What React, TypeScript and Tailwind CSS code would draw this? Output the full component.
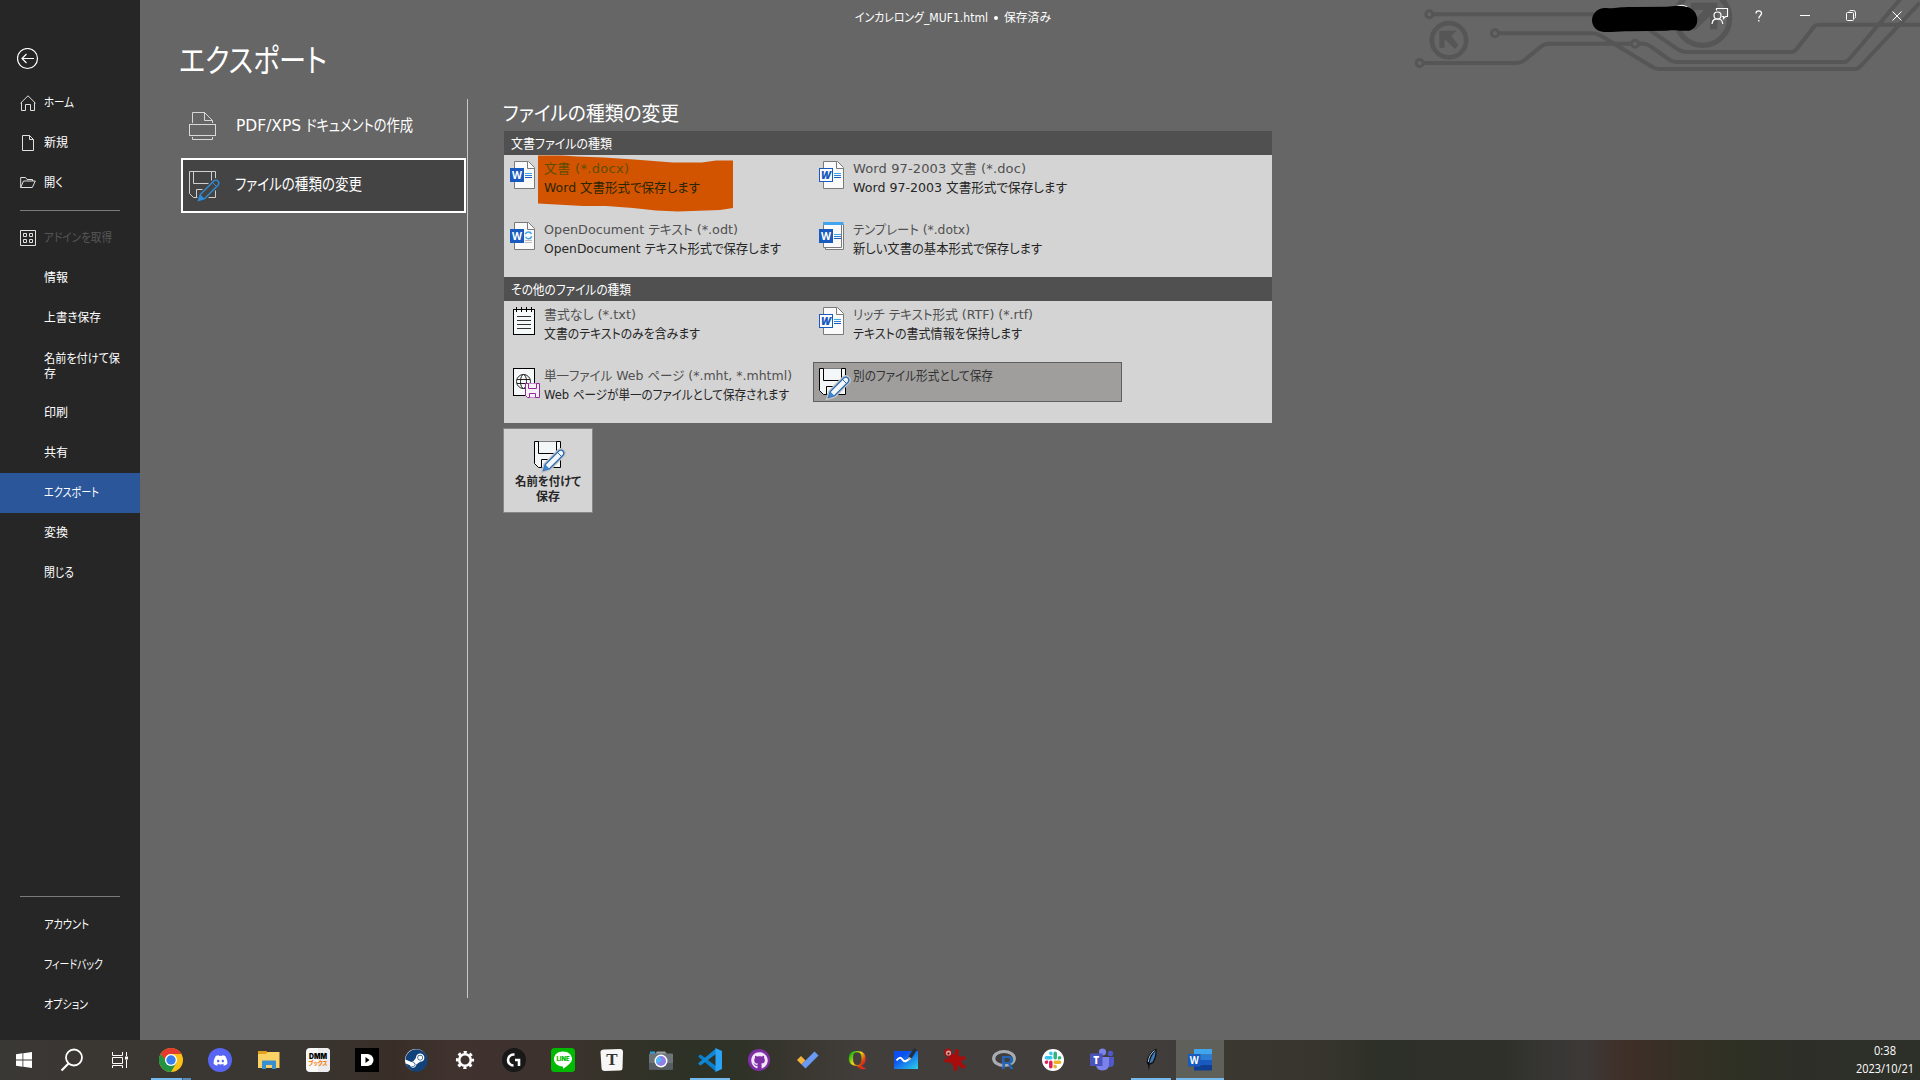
import { useLayoutEffect, useRef, type ReactNode } from "react";
import { FaDiscord, FaGithub, FaSteam } from "react-icons/fa";

/* Text run that spans `w` pixels: long runs are condensed, short ones are letter-spaced. */
function Fit({ w, children, className = "" }: { w: number; children: string; className?: string }) {
  const ref = useRef<HTMLSpanElement>(null);
  useLayoutEffect(() => {
    const el = ref.current;
    if (!el) return;
    el.style.letterSpacing = "0px";
    el.style.transform = "none";
    el.style.width = "auto";
    const natural = el.getBoundingClientRect().width;
    if (natural > w) {
      el.style.transform = `scaleX(${w / natural})`;
      el.style.width = `${w}px`;
    } else {
      el.style.letterSpacing = `${(w - natural) / Math.max(1, children.length - 1)}px`;
    }
  }, [w, children]);
  return (
    <span ref={ref} className={`inline-block origin-left self-start whitespace-pre ${className}`}>
      {children}
    </span>
  );
}

type NavEntry = { label: string; w: number; icon?: ReactNode; active?: boolean; disabled?: boolean };

const stroke = "fill-none stroke-[#e0e0e0]";

const topNav: NavEntry[] = [
  {
    label: "ホーム",
    w: 30,
    icon: (
      <svg width="16" height="16" viewBox="0 0 16 16" className={stroke}>
        <path d="M0.5 8.2L8 0.8l7.5 7.4M1.5 7.3V15.5H5.5V9.5H10.5V15.5H14.5V7.3" />
      </svg>
    ),
  },
  {
    label: "新規",
    w: 24,
    icon: (
      <svg width="16" height="16" viewBox="0 0 16 16" className={stroke}>
        <path d="M2.5 0.5H9.5L13.5 4.5V15.5H2.5ZM9.5 0.5V4.5H13.5" />
      </svg>
    ),
  },
  {
    label: "開く",
    w: 19,
    icon: (
      <svg width="16" height="16" viewBox="0 0 16 16" className={stroke}>
        <path d="M0.7 12.500V2.5H5.5L7 4.5H12.5V6M0.7 12.500L3.5 6H15.3L12.3 12.500Z" />
      </svg>
    ),
  },
];

const midNav: NavEntry[] = [
  {
    label: "アドインを取得",
    w: 68,
    disabled: true,
    icon: (
      <svg width="16" height="16" viewBox="0 0 16 16" className={stroke}>
        <path d="M0.5 0.5H15.5V15.5H0.5ZM3.5 3.5H6.5V6.5H3.5ZM9.5 3.5H12.5V6.5H9.5ZM3.5 9.5H6.5V12.5H3.5ZM9.5 9.5H12.5V12.5H9.5Z" />
      </svg>
    ),
  },
  { label: "情報", w: 24 },
  { label: "上書き保存", w: 57 },
];

const lowNav: NavEntry[] = [
  { label: "印刷", w: 24 },
  { label: "共有", w: 24 },
  { label: "エクスポート", w: 55, active: true },
  { label: "変換", w: 24 },
  { label: "閉じる", w: 30 },
];

const bottomNav: NavEntry[] = [
  { label: "アカウント", w: 45 },
  { label: "フィードバック", w: 59 },
  { label: "オプション", w: 44 },
];

function NavItem({ label, w, icon, active, disabled }: NavEntry) {
  return (
    <div className={`flex h-10 items-center pl-5 ${active ? "bg-[#2b579a]" : ""}`}>
      <div className="mr-2 -mt-px h-4 w-4">{icon}</div>
      <Fit w={w} className={`mt-[11px] text-xs leading-[19px] ${disabled ? "text-[#565656]" : "text-white"}`}>
        {label}
      </Fit>
    </div>
  );
}

function Sidebar() {
  return (
    <nav className="flex w-[140px] shrink-0 flex-col bg-[#262626]">
      <div className="flex h-[83px] pt-12 pl-[17px]">
        <svg width="22" height="22" viewBox="0 0 22 22" className="fill-none stroke-white">
          <circle cx="10.5" cy="10.5" r="10" strokeWidth="1.2" />
          <path d="M17 10.5H5M9.5 6L5 10.5L9.5 15" strokeWidth="1.2" />
        </svg>
      </div>
      {topNav.map((n) => <NavItem key={n.label} {...n} />)}
      <div className="h-[15px] px-5 pt-[7px]"><div className="h-px bg-[#7a7a7a]" /></div>
      {midNav.map((n) => <NavItem key={n.label} {...n} />)}
      <div className="flex h-[55px] flex-col pt-3.5 pl-11 text-xs leading-[15px] text-white">
        <Fit w={76}>名前を付けて保</Fit>
        <Fit w={12}>存</Fit>
      </div>
      {lowNav.map((n) => <NavItem key={n.label} {...n} />)}
      <div className="mt-auto h-[9px] px-5"><div className="h-px bg-[#7a7a7a]" /></div>
      {bottomNav.map((n) => <NavItem key={n.label} {...n} />)}
      <div className="h-[15px]" />
    </nav>
  );
}

function CircuitArt() {
  return (
    <svg width="520" height="90" viewBox="0 0 1560 270" className="absolute top-0 right-0 fill-none stroke-[#565656]">
      <g strokeWidth="12" strokeLinejoin="round">
        <path d="M98 43H680L835 149Q846 156 858 156H1176Q1184 154 1190 147L1242 80Q1247 74 1256 74H1560" />
        <path d="M296 100H575Q590 100 604 108L756 200Q766 207 776 207H1368Q1376 205 1382 198L1560 8" />
        <path d="M70 189H350Q364 188 374 180L420 142Q432 131 446 131H694M716 131H732Q742 132 752 139L808 179Q818 186 830 186H1334Q1342 184 1348 177L1502 -4" />
      </g>
      <g strokeWidth="9">
        <circle cx="88" cy="43" r="10.5" />
        <circle cx="285" cy="100" r="10.5" />
        <circle cx="59" cy="189" r="10.5" />
        <circle cx="705" cy="131" r="10.5" />
      </g>
      <circle cx="147" cy="121" r="51.5" strokeWidth="14" />
      <circle cx="908" cy="55" r="81" strokeWidth="16" />
      <path d="M118 92H170L154 107L174 134V137L164 147L134 116V143H118Z" className="fill-[#565656] stroke-none" />
      <path d="M872 8H952V88H930V48L884 92L868 76L912 30H872Z" className="fill-[#565656] stroke-none" />
      <path d="M830 19Q846 12 862 20" className="stroke-white" strokeWidth="3" />
      <path
        d="M612 24C650 26 660 20 700 21L800 20C830 16 850 18 862 21C900 32 902 84 868 92C830 94 830 88 800 92L690 94C660 92 640 97 612 96C564 92 564 30 612 24Z"
        className="fill-black stroke-none"
      />
    </svg>
  );
}

function TitleBar() {
  return (
    <header className="relative flex h-8 shrink-0">
      <CircuitArt />
      <div className="relative ml-[715px] flex pt-[9px] text-xs leading-[18px] text-white">
        <Fit w={133}>インカレロング_MUF1.html</Fit>
        <div className="mx-1.5 mt-[7px] h-1 w-1 rounded-full bg-white" />
        <Fit w={47}>保存済み</Fit>
      </div>
      <svg width="220" height="32" viewBox="0 0 220 32" className="relative ml-auto fill-none stroke-white">
        <circle cx="17.5" cy="15.5" r="3.5" strokeWidth="1.2" />
        <path d="M12 24C12.500 19 15 19 17.500 19S22 19 22.800 24M16.500 10.500V8.500H27.500V16.500H25.500L23.500 18.500V16.500H22" strokeWidth="1.2" />
        <path d="M56 13.500C56 10 61.500 10 61.500 13.300C61.500 16 58.800 15.500 58.800 18.500M58.800 20V21.500" strokeWidth="1.3" />
        <path d="M100 15.500H110" />
        <rect x="146.500" y="12.500" width="7" height="8" rx="1" />
        <path d="M149 11.500Q149.500 10.500 151 10.500H153.500Q155.500 10.500 155.500 13V16.500Q155.500 18 154.500 18.500" />
        <path d="M192.500 11.500L201.500 20.500M201.500 11.500L192.500 20.500" />
      </svg>
    </header>
  );
}

function FloppyPencil({ dark = false }: { dark?: boolean }) {
  return (
    <svg width="40" height="40" viewBox="0 0 40 40" className="shrink-0">
      <g className={dark ? "fill-none stroke-[#d0d0d0]" : "fill-[#f4f7f7] stroke-black"}>
        <path d="M6.500 6.500H32.500V32.500H10.500L6.500 28.500Z" />
        <path d="M10.500 6.500V18.500H28.500V6.500" />
        <path d="M13.500 32.500V24.500H24V32.500" />
      </g>
      <path
        d="M15.500 35.500L17.300 29.500L31 15.800a3 3 0 0 1 4.200 4.200L21.500 33.700Z"
        className={dark ? "fill-[#444] stroke-[#444]" : "fill-[#c4c4c4] stroke-[#c4c4c4]"}
        strokeWidth="4"
      />
      <path
        d="M15.500 35.500L17.300 29.500L31 15.800a3 3 0 0 1 4.200 4.200L21.500 33.700Z"
        className={dark ? "fill-[#444] stroke-[#2f8fdc]" : "fill-[#f4f7f7] stroke-[#2b6cb8]"}
        strokeWidth="1.3"
      />
      <path d="M15.500 35.500L17.300 29.500L21.500 33.700Z" className={dark ? "fill-[#2f8fdc]" : "fill-[#3f86d0]"} />
      <path d="M29.500 17.500L33.500 21.500" className={dark ? "stroke-[#2f8fdc]" : "stroke-[#2b6cb8]"} />
    </svg>
  );
}

type DocKind = "docx" | "doc" | "odt" | "dotx";

function WordIcon({ kind }: { kind: DocKind }) {
  const outline = kind === "doc";
  return (
    <svg width="40" height="40" viewBox="0 0 40 40" className="shrink-0">
      {kind === "dotx" ? (
        <g className="fill-[#fafafa] stroke-[#7a7a7a]">
          <path d="M12.500 8.500H30.500V33.500H12.500Z" />
          <path d="M10.500 8.500H28.500V31.500H10.500Z" />
          <path d="M10 6H30.500V9H10Z" className="fill-[#41a5ee] stroke-none" />
        </g>
      ) : (
        <g className="fill-[#fafafa] stroke-[#7a7a7a]">
          <path d="M10.500 6.500H24.500L30.500 12.500V33.500H10.500Z" />
          <path d="M23.500 6.500V13.500H30.500" />
        </g>
      )}
      {kind === "odt" ? (
        <g className="fill-none stroke-[#41a5ee]">
          <path d="M21.300 18.300A3.300 3.300 0 0 1 27.500 18M27.700 20.300A3.300 3.300 0 0 1 21.500 20.800" strokeWidth="1.500" />
          <path d="M21 24.500H28M21 26.500H28" className="stroke-[#bdbdbd]" />
        </g>
      ) : (
        <g>
          <path d="M21 18.500H28" className="stroke-[#41a5ee]" />
          <path d="M21 20.500H28" className="stroke-[#2b7cd3]" />
          <path d="M21 22.500H28" className="stroke-[#185abd]" />
        </g>
      )}
      <rect
        x="6.500" y="13.500" width="13" height="13"
        className={outline ? "fill-white stroke-[#185abd]" : "fill-[#185abd] stroke-[#185abd]"}
      />
      <text
        x="13" y="24" textAnchor="middle" textLength="10" lengthAdjust="spacingAndGlyphs"
        className={outline ? "fill-[#185abd] font-['Open_Sans'] text-[11px] font-extrabold italic" : "fill-white font-['Open_Sans'] text-[10.500px] font-bold"}
      >
        W
      </text>
    </svg>
  );
}

function NotepadIcon() {
  return (
    <svg width="40" height="40" viewBox="0 0 40 40" className="shrink-0 fill-[#f6f9f9] stroke-black">
      <rect x="9.500" y="8.500" width="21" height="25" />
      <path d="M12.500 6V11M17.500 6V11M22.500 6V11M27.500 6V11" />
      <path d="M13 15.500H27M13 19.500H27M13 23.500H27M13 27.500H27" className="stroke-[#333]" />
    </svg>
  );
}

function WebIcon() {
  return (
    <svg width="40" height="40" viewBox="0 0 40 40" className="shrink-0 fill-[#f6f9f9] stroke-black">
      <rect x="9.500" y="6.500" width="21" height="27" />
      <g className="fill-none stroke-[#222]">
        <circle cx="19.500" cy="19.500" r="7" />
        <ellipse cx="19.500" cy="19.500" rx="3" ry="7" />
        <path d="M13 17.500H26M13 21.500H26" />
      </g>
      <g className="fill-[#f6f0f7] stroke-[#952aa0]">
        <path d="M21.500 21.500H35.500V35.500H23.500L21.500 33.500Z" />
        <path d="M24.500 21.500V26.500H32.500V21.500M25.500 35.500V31.500H31.500V35.500" />
      </g>
    </svg>
  );
}

type FileType = {
  title: string; tw: number; desc?: string; dw?: number; icon: ReactNode; highlight?: boolean; marked?: boolean;
};

const docTypes: FileType[] = [
  { title: "文書 (*.docx)", tw: 85, desc: "Word 文書形式で保存します", dw: 156, icon: <WordIcon kind="docx" />, marked: true },
  { title: "Word 97-2003 文書 (*.doc)", tw: 173, desc: "Word 97-2003 文書形式で保存します", dw: 214, icon: <WordIcon kind="doc" /> },
  { title: "OpenDocument テキスト (*.odt)", tw: 194, desc: "OpenDocument テキスト形式で保存します", dw: 237, icon: <WordIcon kind="odt" /> },
  { title: "テンプレート (*.dotx)", tw: 117, desc: "新しい文書の基本形式で保存します", dw: 189, icon: <WordIcon kind="dotx" /> },
];

const otherTypes: FileType[] = [
  { title: "書式なし (*.txt)", tw: 92, desc: "文書のテキストのみを含みます", dw: 156, icon: <NotepadIcon /> },
  { title: "リッチ テキスト形式 (RTF) (*.rtf)", tw: 180, desc: "テキストの書式情報を保持します", dw: 169, icon: <WordIcon kind="doc" /> },
  { title: "単一ファイル Web ページ (*.mht, *.mhtml)", tw: 248, desc: "Web ページが単一のファイルとして保存されます", dw: 245, icon: <WebIcon /> },
  { title: "別のファイル形式として保存", tw: 140, icon: <FloppyPencil />, highlight: true },
];

function FileTypeCell({ title, tw, desc, dw, icon, highlight, marked }: FileType) {
  return (
    <div className={`relative flex h-10 ${highlight ? "bg-[#9f9e9c] outline outline-1 -outline-offset-1 outline-[#5f5f5f]" : ""}`}>
      {icon}
      {marked && (
        <svg width="196" height="58" viewBox="0 0 196 58" className="absolute top-0 left-[34px] fill-[#d35400]">
          <path d="M0 0.500H24L40 1.500L66 2.500L96 4.500L135 7.500H164L178 5.500H195V53L182 55L140 56.500L118 55.500L95 53L68 51L45 51L0 48.500Z" />
        </svg>
      )}
      <div className="relative flex flex-col pt-1 text-[13px] leading-[19px]">
        <Fit w={tw} className={marked ? "text-[#5f4c00]" : highlight ? "text-[#333]" : "text-[#505050]"}>{title}</Fit>
        {desc && <Fit w={dw ?? 0} className={marked ? "text-[#2a2600]" : "text-[#262626]"}>{desc}</Fit>}
      </div>
    </div>
  );
}

function TypeSection({ label, lw, items }: { label: string; lw: number; items: FileType[] }) {
  return (
    <section>
      <h3 className="flex h-6 bg-[#505050] pt-[3px] pl-[7px] text-[13px] leading-[19px] text-white">
        <Fit w={lw}>{label}</Fit>
      </h3>
      <div className="grid h-[122px] grid-cols-[309px_309px] content-start gap-y-[21px] bg-[#d4d4d4]">
        {items.map((f) => <FileTypeCell key={f.title} {...f} />)}
      </div>
    </section>
  );
}

function ExportPage() {
  return (
    <main className="flex grow flex-col pl-[41px]">
      <h1 className="flex h-[67px] pt-[5px] text-[32px] leading-[48px] text-white">
        <Fit w={148} className="-ml-0.5">エクスポート</Fit>
      </h1>
      <div className="flex">
        <div className="flex h-[899px] w-[287px] flex-col gap-1 border-r border-[#c8c8c8] text-base leading-6 text-white">
          <div className="flex h-[55px] w-[285px] pt-[7px] pl-0.5">
            <svg width="40" height="40" viewBox="0 0 40 40" className="fill-none stroke-[#d8d8d8]">
              <path d="M9.500 17V6.500H21.500L29.500 14.500V17M21.500 6.500V14.500H29.500M9.500 31V33.500H29.500V31" />
              <rect x="6.500" y="18.500" width="26" height="11" />
            </svg>
            <div className="ml-[13px] flex pt-2">
              <Fit w={70}>PDF/XPS </Fit>
              <Fit w={107}>ドキュメントの作成</Fit>
            </div>
          </div>
          <div className="flex h-[55px] w-[285px] border-2 border-white bg-[#444] pt-[5px]">
            <FloppyPencil dark />
            <Fit w={127} className="mt-2 ml-3">ファイルの種類の変更</Fit>
          </div>
        </div>
        <div className="ml-9 w-[768px]">
          <h2 className="flex h-8 pt-px text-xl leading-7 text-white">
            <Fit w={176} className="-ml-px">ファイルの種類の変更</Fit>
          </h2>
          <TypeSection label="文書ファイルの種類" lw={101} items={docTypes} />
          <TypeSection label="その他のファイルの種類" lw={120} items={otherTypes} />
          <button className="mt-[5px] -ml-px flex h-[85px] w-[90px] flex-col items-center border border-[#868686] bg-[#d4d4d4] pt-1.5 text-xs leading-[15px] font-bold text-[#262626]">
            <div className="h-10"><FloppyPencil /></div>
            <div className="flex flex-col items-center">
              <span className="flex"><Fit w={66}>名前を付けて</Fit></span>
              <span className="flex"><Fit w={24}>保存</Fit></span>
            </div>
          </button>
        </div>
      </div>
    </main>
  );
}

/* ---------- Taskbar ---------- */

type TaskApp = { id: string; icon: ReactNode; running?: boolean; stacked?: boolean; active?: boolean };

const svg24 = { width: 24, height: 24, viewBox: "0 0 24 24" };

const slackArm =
  "M5.042 15.165a2.528 2.528 0 0 1-2.520 2.523A2.528 2.528 0 0 1 0 15.165a2.527 2.527 0 0 1 2.522-2.520h2.520v2.520zM6.313 15.165a2.527 2.527 0 0 1 2.521-2.520 2.527 2.527 0 0 1 2.521 2.520v6.313A2.528 2.528 0 0 1 8.834 24a2.528 2.528 0 0 1-2.521-2.522v-6.313z";

const apps: TaskApp[] = [
  {
    id: "chrome",
    running: true,
    stacked: true,
    icon: (
      <svg {...svg24}>
        <circle cx="12" cy="12" r="12" fill="#fbc116" />
        <path d="M1.600 6A12 12 0 0 0 12 24L17.200 15H12L6.800 15Z" fill="#229342" />
        <path d="M1.600 6A12 12 0 0 1 22.400 6H12A6 6 0 0 0 6.800 15Z" fill="#e33b2e" />
        <path d="M1.600 6L6.800 15L12 18V12H7Z" fill="#229342" />
        <circle cx="12" cy="12" r="6" fill="#fff" />
        <circle cx="12" cy="12" r="4.700" fill="#3a7ded" />
      </svg>
    ),
  },
  {
    id: "discord",
    icon: <div className="flex h-6 w-6 items-center justify-center rounded-full bg-[#5865f2] text-white"><FaDiscord size={15} /></div>,
  },
  {
    id: "explorer",
    icon: (
      <svg {...svg24}>
        <path d="M1 5H9L10.500 4H22.500V20H1Z" fill="#fbd365" />
        <path d="M1 3H9.500L10.500 4.500L8.500 6H1Z" fill="#e0a11b" />
        <path d="M5 21V13.500Q5 12.500 6 12.500H18Q19 12.500 19 13.500V21H15V17H9V21Z" fill="#3a8fd0" />
      </svg>
    ),
  },
  {
    id: "dmm",
    icon: (
      <svg {...svg24}>
        <rect width="24" height="24" rx="4" fill="#f8f8f8" />
        <path d="M12 0H20Q24 0 24 4V20Q24 24 20 24H12Z" fill="#ececec" />
        <text x="12" y="10.500" textAnchor="middle" textLength="18" lengthAdjust="spacingAndGlyphs" className="fill-black font-['Inter'] text-[7px] font-black">DMM</text>
        <text x="12" y="17" textAnchor="middle" textLength="19" lengthAdjust="spacingAndGlyphs" className="fill-[#f58220] font-['Noto_Sans_CJK_JP'] text-[6px] font-black">ブックス</text>
      </svg>
    ),
  },
  {
    id: "dplay",
    icon: (
      <svg {...svg24}>
        <rect width="24" height="24" fill="#000" />
        <path d="M6 6H12.500A6 6 0 0 1 12.500 18H6Z" fill="#fff" />
        <path d="M10.500 9L14.500 12L10.500 15Z" fill="#000" />
      </svg>
    ),
  },
  {
    id: "steam",
    icon: (
      <div className="flex h-[22px] w-[22px] items-center justify-center rounded-full bg-white text-[#11437a]">
        <FaSteam size={23} className="shrink-0" />
      </div>
    ),
  },
  {
    id: "settings",
    icon: (
      <svg {...svg24} fill="none" stroke="#fff">
        <circle cx="12" cy="12" r="5.800" strokeWidth="2.600" />
        <circle cx="12" cy="12" r="7.900" strokeWidth="2.400" strokeDasharray="3.100 3.104" strokeDashoffset="1.550" />
      </svg>
    ),
  },
  {
    id: "ghub",
    icon: (
      <svg {...svg24}>
        <circle cx="12" cy="12" r="12" fill="#181818" />
        <path d="M12.500 6.500H11.500A5.500 5.500 0 0 0 11.500 17.500M13 12H17V18" fill="none" stroke="#fff" strokeWidth="2.600" />
      </svg>
    ),
  },
  {
    id: "line",
    icon: (
      <svg {...svg24}>
        <rect width="24" height="24" rx="3.500" fill="#00b900" />
        <path d="M12 3.500C17.500 3.500 21 7 21 11C21 15 16 18 12 20.800C12 19.500 12.400 18.600 11.500 18.500C6.500 18.200 3 15 3 11C3 7 6.500 3.500 12 3.500Z" fill="#fff" />
        <text x="12" y="13" textAnchor="middle" textLength="13" lengthAdjust="spacingAndGlyphs" className="fill-[#00b900] font-['Inter'] text-[5.500px] font-black">LINE</text>
      </svg>
    ),
  },
  {
    id: "typora",
    icon: (
      <svg {...svg24}>
        <path d="M4 1.500L20 1Q23 1 23 4L22.500 20Q22.500 22.500 20 22.500L5 23Q1.500 23 1.500 20L0.500 4Q0.500 1.500 4 1.500Z" fill="#f7f7f7" />
        <text x="12" y="17" textAnchor="middle" className="fill-[#333] font-['Liberation_Serif'] text-[17px] font-bold">T</text>
      </svg>
    ),
  },
  {
    id: "camera",
    icon: (
      <svg {...svg24}>
        <path d="M1 3.500H6V6H1Z" fill="#2f9fe0" />
        <path d="M8 3.500H16L18 6H6Z" fill="#9aa0a4" />
        <rect y="5.500" width="24" height="16" rx="1" fill="#6d757b" />
        <rect y="15" width="24" height="6.500" fill="#575e63" />
        <circle cx="12" cy="13" r="6.500" fill="#fff" />
        <circle cx="12" cy="13" r="5" fill="#8f7fe8" />
        <path d="M8 16A5 5 0 0 1 10 8.500L13 12Z" fill="#53b7f0" />
      </svg>
    ),
  },
  {
    id: "vscode",
    running: true,
    icon: (
      <svg {...svg24}>
        <path d="M0.500 8L2.500 6.500L18 18V23.500L0.500 9Z" fill="#0a7fcc" />
        <path d="M0.500 16L2.500 17.500L18 6V0.500L0.500 15Z" fill="#1088d6" />
        <path d="M17.500 0L24 3V21L17.500 24Z" fill="#2aa3f4" />
      </svg>
    ),
  },
  {
    id: "github",
    icon: <div className="flex h-[22px] w-[22px] items-center justify-center rounded-full bg-[#7f2fa6] text-[#f3e6f8]"><FaGithub size={17} /></div>,
  },
  {
    id: "todo",
    icon: (
      <svg {...svg24}>
        <path d="M1 12L5 8L9.500 12.500L5.500 16.500Z" fill="#f3b33d" />
        <path d="M5.500 16.500L18.500 3.500L22.500 7.500L9.500 20.500Z" fill="#6a9bf4" />
      </svg>
    ),
  },
  {
    id: "quiz",
    icon: (
      <svg width="24" height="32" viewBox="0 -4 24 32" className="overflow-visible">
        <defs>
          <linearGradient id="quizGrad" x1="0" y1="0" x2="1" y2="1">
            <stop offset="0.250" stopColor="#0fb80f" />
            <stop offset="0.500" stopColor="#f0e010" />
            <stop offset="0.750" stopColor="#e02a10" />
          </linearGradient>
        </defs>
        <text x="12" y="18" textAnchor="middle" fill="url(#quizGrad)" className="font-['Liberation_Serif'] text-[24px] font-bold">Q</text>
      </svg>
    ),
  },
  {
    id: "whiteboard",
    icon: (
      <svg {...svg24}>
        <defs>
          <linearGradient id="boardGrad" x1="0" y1="0" x2="1" y2="1">
            <stop offset="0.300" stopColor="#0b50f0" />
            <stop offset="1" stopColor="#2fd0e8" />
          </linearGradient>
        </defs>
        <rect y="3" width="24" height="18" fill="url(#boardGrad)" />
        <path d="M2.500 12.500Q6 8 8 11T12 13T16 10.500" fill="none" stroke="#fff" strokeWidth="2" />
        <path d="M16 9.500L21.500 1" stroke="#24303c" strokeWidth="3.500" />
        <path d="M14 13L15 9L17.500 10.500Z" fill="#e8b890" />
      </svg>
    ),
  },
  {
    id: "creature",
    icon: (
      <svg {...svg24}>
        <g fill="none" stroke="#a80c0c" strokeLinecap="round" strokeLinejoin="round">
          <path d="M12.500 12L14 3" strokeWidth="3.800" />
          <path d="M10 12L3 12.500" strokeWidth="3.800" />
          <path d="M12 15L12.500 21" strokeWidth="3.800" />
          <path d="M14 11L21 10M17 15Q18 19 21 18.500" strokeWidth="3.400" />
          <path d="M6 6L13 13" strokeWidth="5.500" />
        </g>
        <circle cx="13" cy="12.500" r="5.800" fill="#a80c0c" />
        <circle cx="5" cy="4.500" r="4" fill="#9c1414" />
        <circle cx="5.500" cy="5" r="2.600" fill="#e0a0a0" />
        <circle cx="5.500" cy="5.500" r="1.100" fill="#4a0808" />
      </svg>
    ),
  },
  {
    id: "rlang",
    icon: (
      <svg {...svg24}>
        <ellipse cx="12" cy="10.500" rx="10.300" ry="7" fill="none" stroke="#a9adb3" strokeWidth="3.200" />
        <text x="9" y="21" className="fill-[#2266b8] font-['Liberation_Sans'] text-[18px] font-bold">R</text>
      </svg>
    ),
  },
  {
    id: "slack",
    icon: (
      <svg {...svg24}>
        <circle cx="12" cy="12" r="11" fill="#fff" />
        <g transform="translate(3.600 3.600) scale(0.700)">
          <path d={slackArm} fill="#e01e5a" />
          <path d={slackArm} fill="#36c5f0" transform="rotate(90 12 12)" />
          <path d={slackArm} fill="#2eb67d" transform="rotate(180 12 12)" />
          <path d={slackArm} fill="#ecb22e" transform="rotate(270 12 12)" />
        </g>
      </svg>
    ),
  },
  {
    id: "teams",
    icon: (
      <svg {...svg24}>
        <circle cx="20.500" cy="5.500" r="2.700" fill="#5059c9" />
        <circle cx="12.500" cy="4" r="3.600" fill="#7b83eb" />
        <path d="M17 9H24V15Q24 19 20 19H17Z" fill="#5059c9" />
        <path d="M6 9H19V16Q19 22.500 12.500 22.500T6 16Z" fill="#7b83eb" />
        <rect y="5.500" width="12.500" height="12.500" fill="#4b53bc" />
        <text x="6.200" y="15.500" textAnchor="middle" className="fill-white font-['Open_Sans'] text-[10px] font-extrabold">T</text>
      </svg>
    ),
  },
  {
    id: "feather",
    running: true,
    icon: (
      <svg {...svg24}>
        <path d="M17.500 0.500Q18.500 8 14.500 15L10.500 17L10 23L9 17Q6.500 14 9 9Q12 3 17.500 0.500Z" fill="#0b0f14" />
        <path d="M16.500 2.500Q16.500 9 13.500 14L10.500 15.500Q12 8 16.500 2.500Z" fill="#3f78b5" />
        <path d="M15.500 2.500Q10 7 9.300 14" stroke="#a9c6de" fill="none" />
      </svg>
    ),
  },
  {
    id: "word",
    running: true,
    active: true,
    icon: (
      <svg {...svg24}>
        <path d="M6 1H24V6.500H6Z" fill="#41a5ee" />
        <path d="M6 6.500H24V12H6Z" fill="#2b7cd3" />
        <path d="M6 12H24V17H6Z" fill="#185abd" />
        <path d="M6 17H24V22.500H6Z" fill="#103f91" />
        <rect y="6" width="12.500" height="12.500" fill="#185abd" />
        <text x="6.300" y="16" textAnchor="middle" textLength="9" lengthAdjust="spacingAndGlyphs" className="fill-white font-['Open_Sans'] text-[10px] font-bold">W</text>
      </svg>
    ),
  },
];

function Taskbar() {
  return (
    <footer className="flex h-10 shrink-0 bg-[linear-gradient(90deg,#3a3834_0px,#3a3631_300px,#382e27_390px,#40322e_450px,#3d322e_560px,#343228_620px,#2d3226_690px,#2f3227_740px,#3a3731_800px,#423e3b_860px,#423e3c_1150px,#3a3730_1240px,#37352e_1320px,#2d3028_1380px,#30302a_1500px,#353532_1540px,#3d3937_1585px,#3f2f28_1625px,#372f26_1670px,#2f3124_1730px,#2d2e28_1800px,#2d2f29_1920px)]">
      <div className="flex h-10 w-12 items-center justify-center">
        <svg width="16" height="16" viewBox="0 0 16 16" fill="#fff">
          <path d="M0 2.200L6.500 1.300V7.500H0ZM7.300 1.200L16 0V7.500H7.300ZM0 8.400H6.500V14.700L0 13.800ZM7.300 8.400H16V16L7.300 14.800Z" />
        </svg>
      </div>
      <div className="flex h-10 w-12 items-center justify-center">
        <svg width="24" height="24" viewBox="0 0 24 24" fill="none" stroke="#fff" strokeWidth="1.800">
          <circle cx="14" cy="9.500" r="8" />
          <path d="M8.500 15.500L1.500 22.500" strokeWidth="2.200" />
        </svg>
      </div>
      <div className="flex h-10 w-12 items-center justify-center">
        <svg width="16" height="16" viewBox="0 0 16 16" fill="none" stroke="#fff" className="-mt-px">
          <path d="M0.500 0V3.500H10.500V0M0.500 16V13.500H10.500V16M0.500 5.500H10.500V11.500H0.500ZM14.500 0V4M14.500 8V16" />
          <path d="M13 4.500H16V7.500H13Z" className="fill-white stroke-none" />
        </svg>
      </div>
      <div className="ml-[3px] flex gap-px">
        {apps.map((a) => (
          <div key={a.id} className={`flex h-10 w-12 flex-col items-center ${a.active ? "bg-[#60605b]" : ""}`}>
            <div className="flex h-[38px] items-center pt-0.5">{a.icon}</div>
            {a.running && (
              <div className={`flex h-0.5 justify-end bg-[#76b9ed] ${a.active ? "w-12" : "w-10"}`}>
                {a.stacked && <div className="h-0.5 w-[9px] border-l border-[#3f5a72] bg-[#5a8ab3]" />}
              </div>
            )}
          </div>
        ))}
      </div>
      <div className="mr-[6px] ml-auto flex w-[58px] flex-col items-center pt-0.5 font-['Open_Sans','Noto_Sans_CJK_JP',sans-serif] text-xs leading-[18px] text-white">
        <span className="flex"><Fit w={22}>0:38</Fit></span>
        <Fit w={58}>2023/10/21</Fit>
      </div>
    </footer>
  );
}

export default function App() {
  return (
    <div className="flex h-[1080px] w-[1920px] flex-col overflow-hidden bg-[#666] font-['DejaVu_Sans','Noto_Sans_CJK_JP',sans-serif] [font-feature-settings:'palt']">
      <div className="flex h-[1040px]">
        <Sidebar />
        <div className="flex grow flex-col">
          <TitleBar />
          <ExportPage />
        </div>
      </div>
      <Taskbar />
    </div>
  );
}
